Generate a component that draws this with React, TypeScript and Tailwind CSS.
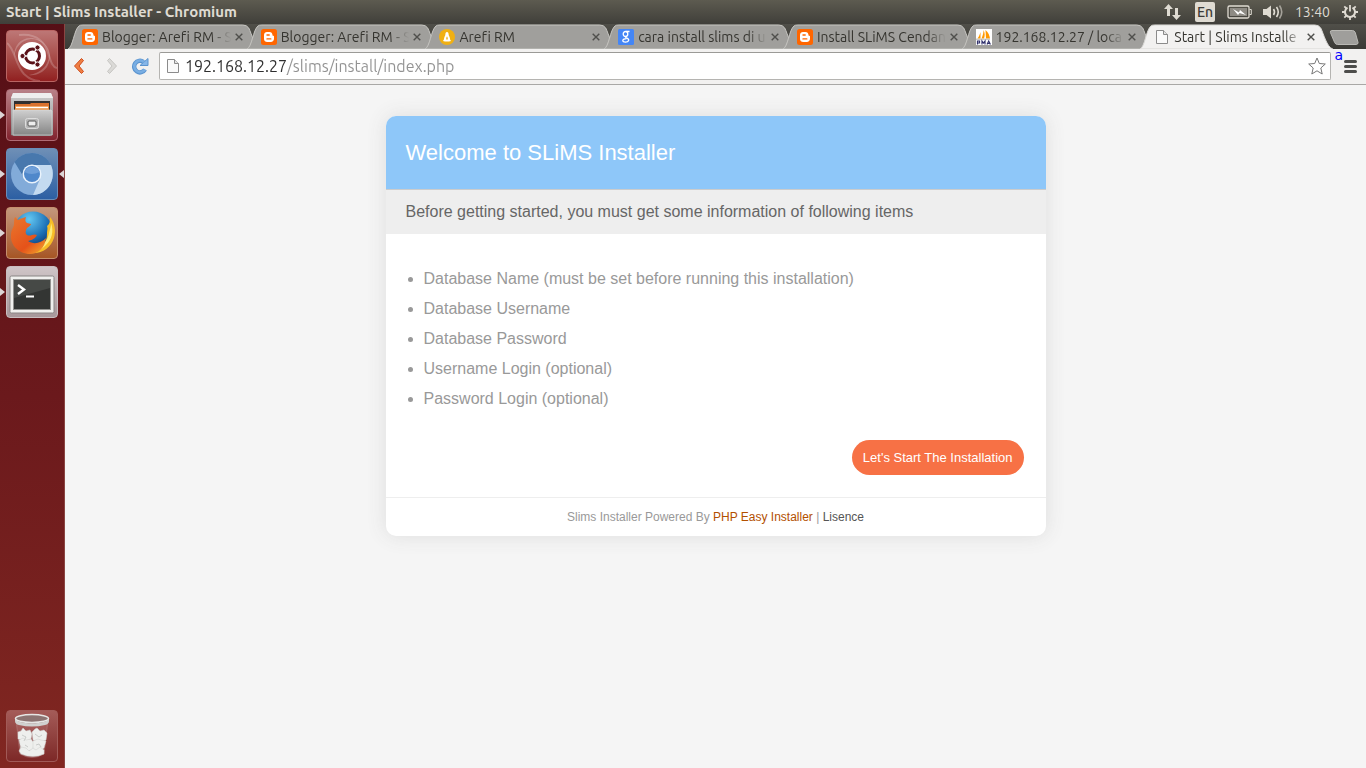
import type { ReactNode } from "react";
import clsx from "clsx";

const tabs = [
  { title: "Blogger: Arefi RM - S", icon: "blogger" },
  { title: "Blogger: Arefi RM - S", icon: "blogger" },
  { title: "Arefi RM", icon: "linux" },
  { title: "cara install slims di u", icon: "google" },
  { title: "Install SLiMS Cendan", icon: "blogger" },
  { title: "192.168.12.27 / loca", icon: "pma" },
  { title: "Start | Slims Installe", icon: "page", active: true },
];

const requirements = [
  "Database Name (must be set before running this installation)",
  "Database Username",
  "Database Password",
  "Username Login (optional)",
  "Password Login (optional)",
];

function PageIcon() {
  return (
    <svg viewBox="0 0 16 16" className="size-4 shrink-0">
      <path d="M2.5 1.5h7l4 4v9h-11z" fill="#fafafa" stroke="#8b8b8b" />
      <path d="M9.5 1.5v4h4" fill="#e4e4e4" stroke="#8b8b8b" />
    </svg>
  );
}

function Favicon({ name }: { name: string }) {
  if (name === "blogger") {
    return (
      <svg viewBox="0 0 16 16" className="size-4 shrink-0">
        <rect width="16" height="16" rx="2.5" fill="#ff6600" />
        <path
          d="M6 3h2.5C10.3 3 11.4 4.3 11.4 5.6c0 .9.3 1.2.9 1.2.5 0 .7.3.7.8v2.2C13 11.7 11.6 13 9.8 13H6.2C4.4 13 3 11.7 3 9.9V6c0-1.7 1.3-3 3-3z"
          fill="#fff"
        />
        <path d="M6 6h2.2M6 9.900h3.800" stroke="#ff6600" strokeWidth="1.4" strokeLinecap="round" />
      </svg>
    );
  }
  if (name === "linux") {
    return (
      <svg viewBox="0 0 16 16" className="size-4 shrink-0">
        <circle cx="8" cy="8" r="8" fill="#f0b013" />
        <path d="M8 3c1.200 0 1.600 1 1.600 2.300 0 1.500 1.500 3 1.500 5.200l.9 1.500-2 .6H6l-2-.6.9-1.500c0-2.200 1.500-3.700 1.500-5.200C6.400 4 6.800 3 8 3z" fill="#fff" />
        <path d="M8 7.200c.6 1 .9 2 .8 3.300H7.200C7.100 9.200 7.400 8.200 8 7.200z" fill="#f0b013" />
      </svg>
    );
  }
  if (name === "google") {
    return (
      <svg viewBox="0 0 16 16" className="size-4 shrink-0">
        <rect width="16" height="16" rx="1.500" fill="#4486f6" />
        <g fill="none" stroke="#fff" strokeWidth="1.300">
          <ellipse cx="7.500" cy="5" rx="2.300" ry="2.500" />
          <path d="M8 2.500h3.500M9 7.200c-1.800.8-1.800 1.200 0 2 1.500.7 2 1.500 1.500 2.600-.7 1.800-5.500 1.800-5.700 0C4.700 10.300 6.500 9.600 8.500 9.600" />
        </g>
      </svg>
    );
  }
  if (name === "pma") {
    return (
      <svg viewBox="0 0 16 16" className="size-4 shrink-0">
        <path d="M0 0h16v16H0z" fill="#fff" />
        <path d="M1.500 9.500C3 7.500 4 5 4.500 3v6.500zM5.500 9.500C7 6 7.600 3 7.500 1c1.500 3 1.500 6 .5 8.500zM9.500 1c3 2.500 4 5.500 4.500 8.500H10z" fill="#f90" />
        <path d="M0 10.200h14" stroke="#b9b4a8" />
        <path d="M1.500 15.500V12h2v2h-2M6 15.500V12l1.500 2L9 12v3.500M11 15.500l1.700-3.500 1.700 3.500M11.600 14.500h2.200" fill="none" stroke="#33336e" strokeWidth="1.200" />
      </svg>
    );
  }
  return <PageIcon />;
}

function StatusIcons() {
  return (
    <div className="flex items-center text-[#dfdbd2]">
      <svg viewBox="0 0 18 18" className="mr-3.5 size-[18px]" fill="currentColor">
        <path d="M5.500 1l4.500 5H7v7H4V6H1zM13.500 17L9 12h3V5h3v7h3z" />
      </svg>
      <span className="mr-3 flex h-5 w-5 items-center justify-center rounded-xs bg-[#dfdbd2] text-sm font-medium text-[#3c3b37]">En</span>
      <svg viewBox="0 0 26 16" className="mr-2.5 h-4 w-[26px]">
        <rect x="1" y="2" width="21" height="12" rx="1.500" fill="none" stroke="#dfdbd2" strokeWidth="1.300" />
        <rect x="3" y="4" width="17" height="8" fill="#8e8b84" />
        <path d="M22.500 5.500h1.800v5h-1.800" fill="none" stroke="#dfdbd2" />
        <path d="M6 5l6 3.500 1-2.500 6 5-6.500-2-1.500 2z" fill="#fff" />
      </svg>
      <svg viewBox="0 0 20 16" className="mr-3 h-4 w-5" fill="none" stroke="#dfdbd2" strokeWidth="1.600">
        <path d="M0 5h3.500L8 1.500v13L3.500 11H0z" fill="#dfdbd2" stroke="none" />
        <path d="M10.500 5q2 3 0 6M13.500 3q3.500 5 0 10" />
        <path d="M16.500 1.500q4.500 6.500 0 13" stroke="#a5a29a" />
      </svg>
      <time className="mr-3 text-sm">13:40</time>
      <svg viewBox="0 0 16 16" className="size-4" fill="none" stroke="#dfdbd2">
        <path d="M5.500 3.700A5 5 0 1 0 10.500 3.700" strokeWidth="2" />
        <path d="M8 1v6.500" strokeWidth="1.800" />
        <path d="M0 8h3M13 8h3M2.300 13.700l2-2M13.700 13.700l-2-2M8 13v3M2.300 2.300l2 2M13.700 2.300l-2 2" strokeWidth="1.800" />
      </svg>
    </div>
  );
}

function MenuBar() {
  return (
    <header className="flex h-6 shrink-0 items-center justify-between bg-linear-to-b from-[#5d5b50] to-[#403f3a] pr-2 pl-1.5 text-[#dfdbd2]">
      <h1 className="text-[15px] leading-6 font-bold">Start | Slims Installer - Chromium</h1>
      <StatusIcons />
    </header>
  );
}

function LauncherItem({ label, className, running, focused, children }: {
  label: string;
  className: string;
  running?: boolean;
  focused?: boolean;
  children: ReactNode;
}) {
  return (
    <div className="flex items-center">
      <span className="w-1.5">
        {running && (
          <svg viewBox="0 0 5 8" className="h-2 w-[5px]">
            <path d="M0 0l5 4-5 4z" fill="#dcd5d6" />
          </svg>
        )}
      </span>
      <button
        type="button"
        aria-label={label}
        className={clsx("size-13 overflow-hidden rounded-sm border", className)}
      >
        <svg viewBox="0 0 50 50" className="size-full">{children}</svg>
      </button>
      {focused && (
        <svg viewBox="0 0 5 8" className="ml-px h-2 w-[5px]">
          <path d="M5 0L0 4l5 4z" fill="#dcd5d6" />
        </svg>
      )}
    </div>
  );
}

function Launcher() {
  return (
    <aside className="flex w-[65px] shrink-0 flex-col justify-between border-r border-[#8a4542] bg-linear-to-b from-[#560f16] via-[#6b191c] to-[#812721] pt-1.5 pb-1.5">
      <nav className="flex flex-col gap-[7px]" aria-label="Launcher">
        <LauncherItem label="Search" className="border-[#b96563] bg-linear-to-b from-[#bd7776] to-[#911f20]">
          <path d="M7 27C6 11 19 3 32 9c11 5 14 17 8 27-4 6-12 9-18 8 12-2 20-10 20-20C41 13 32 8 24 8 14 9 8 17 7 27z" fill="#fff" opacity=".22" />
          <path d="M0 12C8 18 8 33 17 43c5 5 10 7 16 7M50 37C41 35 44 17 33 9 27 4 20 3 12 4" fill="none" stroke="#fff" strokeWidth="2" opacity=".2" />
          <circle cx="25" cy="25" r="14" fill="#fff" />
          <circle cx="25.500" cy="25" r="7" fill="none" stroke="#5b1218" strokeWidth="3" />
          <path d="M20 25h-5M28 20l3-5M28 30l3 5" stroke="#fff" strokeWidth="1.500" />
          <g fill="#5b1218" stroke="#fff">
            <circle cx="15.500" cy="25" r="2.600" />
            <circle cx="30.500" cy="16.500" r="2.600" />
            <circle cx="30.500" cy="33.500" r="2.600" />
          </g>
        </LauncherItem>
        <LauncherItem label="Files" running className="border-[#b06b74] bg-linear-to-b from-[#b88188] to-[#81212e]">
          <defs>
            <linearGradient id="cabinet" x2="0" y2="1">
              <stop stopColor="#cfcfcf" />
              <stop offset="1" stopColor="#858585" />
            </linearGradient>
          </defs>
          <path d="M6 3h38l2 5v37l-3 1H7l-3-1V8z" fill="url(#cabinet)" />
          <path d="M6 3h38l2 5H4z" fill="#eee" />
          <path d="M7 11h36v11H7z" fill="#303030" />
          <path d="M8 14h15l1-1h18v9H8z" fill="#d9722f" />
          <path d="M8 16h34v5H8z" fill="#eb8f3c" />
          <path d="M9 17.500h32" stroke="#fff" strokeWidth="1.500" />
          <path d="M6 20h38l1 1v24H6z" fill="url(#cabinet)" stroke="#ddd" strokeWidth=".6" />
          <rect x="18.500" y="28.500" width="13" height="10" rx="2" fill="#b5b5b5" stroke="#ddd" />
          <rect x="21" y="31" width="8" height="5" rx="1" fill="#ededed" stroke="#555" />
        </LauncherItem>
        <LauncherItem label="Chromium" running focused className="border-[#6a8db8] bg-linear-to-b from-[#6e8fb6] to-[#2c5fa3]">
          <circle cx="25" cy="25" r="21" fill="#82abd9" />
          <path d="M7.500 13C12 7 18 4 25 4c9 0 16 5 19 12H25c-6 0-10 5-9 11z" fill="#4878ad" />
          <path d="M25 16h19c6 15-4 30-18 30l7-16z" fill="#c3daf0" />
          <circle cx="25" cy="25" r="9.500" fill="#eaf3fc" />
          <circle cx="25" cy="25" r="8" fill="#4f88cb" />
          <path d="M17.500 23a8 8 0 0 1 15 0q-8 4-15 0z" fill="#6f9fd8" />
        </LauncherItem>
        <LauncherItem label="Firefox" running className="border-[#c58f6e] bg-linear-to-b from-[#c3977c] to-[#a65624]">
          <defs>
            <radialGradient id="globe" cx=".4" cy=".2" r=".8">
              <stop stopColor="#63c8f3" />
              <stop offset=".6" stopColor="#1d70b5" />
              <stop offset="1" stopColor="#0b2f68" />
            </radialGradient>
            <linearGradient id="fox" x2=".8" y2="1">
              <stop stopColor="#e9772d" />
              <stop offset=".7" stopColor="#e5521a" />
              <stop offset="1" stopColor="#f09a2b" />
            </linearGradient>
          </defs>
          <circle cx="26" cy="23" r="19.500" fill="url(#globe)" />
          <path d="M43 9c5 6 6 14 4 21-3 9-11 15-20 15 8-4 13-10 13-19 0-4 1-5 0-8 3-2 3-5 3-9z" fill="#f7bd27" />
          <path d="M44 15c3 8 1 17-6 23-3 3-6 4-9 4 7-5 12-10 13-17 1-4 2-6 2-10z" fill="#fdec7b" />
          <path d="M8 9c1 1 2 2 3 3 3-2 6-2 8-3-1 3-1 5 1 6l4 1c0 2-4 3-5 6-1 3 0 4 1 5 4 2 6-2 10 0-3 5-6 5-9 6 6 4 13 2 18-3-1 10-8 16-16 16C12 46 3 37 4 27c0-5 3-8 3-11 0-2 0-5 1-7z" fill="url(#fox)" />
        </LauncherItem>
        <LauncherItem label="Terminal" running className="border-[#c9bec0] bg-linear-to-b from-[#cfc5c7] to-[#a7989b]">
          <rect x="3" y="9" width="44" height="37" rx="1.500" fill="#f0f0ee" stroke="#898584" />
          <rect x="6" y="12" width="38" height="31" fill="#929290" />
          <rect x="7" y="13" width="36" height="29" fill="#333533" />
          <path d="M7 13h36v8L7 31z" fill="#747674" opacity=".3" />
          <path d="M11 18l6 4.500-6 4.500" fill="none" stroke="#fff" strokeWidth="2.400" />
          <path d="M19 29.500h8" stroke="#fff" strokeWidth="2" />
        </LauncherItem>
      </nav>
      <LauncherItem label="Trash" className="border-[#a15a57] bg-linear-to-b from-[#a45b58] to-[#7d2827]">
        <path d="M9 8l4 35q12 7 24 0l4-35" fill="#b77775" opacity=".35" stroke="#d1aaa9" />
        <g fill="#eeefed" stroke="#cfd1cf" strokeWidth=".5">
          <path d="M11 21l3-1 2-3 3 3 4-1 2 4-1 5-5 2-8-2z" />
          <path d="M25 21l3-3 2-1 3 3 4-1 3 3-1 7-7 3-6-3z" />
          <path d="M12 29l4-2 3 2 5-1 3 4-1 6-6 3-6-3z" />
          <path d="M26 30l5-2 3 1 5 1-2 7-5 4-6-3z" />
          <path d="M12 40l2-4 5 1 3 3 4-3 3 2 4-3 4 3v4q-11 5-23 0z" />
        </g>
        <path d="M15 24l4 2-2 4M28 23l4 3 3-2M18 34l3 2M29 34l3-1 2 3" fill="none" stroke="#b9bcb9" strokeWidth=".7" />
        <ellipse cx="25" cy="8" rx="16.500" ry="4.500" fill="#8c7472" />
        <path d="M8 7c0 7 34 7 34 0v3q0 3-4 4-13 3-26 0-4-1-4-4z" fill="#d0d1cf" />
        <ellipse cx="25" cy="7.500" rx="16.500" ry="4" fill="none" stroke="#e6e6e4" strokeWidth="1.500" />
      </LauncherItem>
    </aside>
  );
}

function CloseIcon() {
  return (
    <svg viewBox="0 0 8 8" className="size-2" stroke="#4f4f4c" strokeWidth="1.400">
      <path d="M.7.7l6.600 6.600M7.300.7L.7 7.300" />
    </svg>
  );
}

function Tab({ title, icon, active }: { title: string; icon: string; active?: boolean }) {
  return (
    <div className="relative -mr-3.5 flex h-[25px] min-w-0 flex-1 items-center pr-[18px] pl-3.5">
      <svg viewBox="0 0 193 25" preserveAspectRatio="none" className="absolute inset-0 -z-10 size-full">
        <path
          d="M0 25C5 23 6 6 11 2Q12 1 15 1H175Q179 1 181 4C184 10 187 23 193 25z"
          fill={active ? "#f2f1f0" : "#a09f9c"}
          stroke={active ? "#d9d8d5" : "#c6c5c1"}
          strokeWidth="1"
        />
      </svg>
      <button type="button" role="tab" aria-selected={!!active} className="flex min-w-0 flex-1 items-center gap-1 text-left">
        <Favicon name={icon} />
        <span className="min-w-0 flex-1 overflow-hidden mask-r-from-85% text-sm leading-5 whitespace-nowrap text-[#35342f]">
          {title}
        </span>
      </button>
      <button type="button" aria-label="Close tab" className="ml-1">
        <CloseIcon />
      </button>
    </div>
  );
}

function TabStrip() {
  return (
    <div className="relative isolate flex h-[25px] items-end bg-linear-to-b from-[#504f49] to-[#3b3a36] pr-[7px] pl-[3px]">
      <div role="tablist" className="flex min-w-0 flex-1 pr-3.5">
        {tabs.map((tab, i) => (
          <div key={i} className={clsx("isolate flex min-w-0 flex-1", tab.active && "z-10")}>
            <Tab {...tab} />
          </div>
        ))}
      </div>
      <button type="button" aria-label="New tab" className="mb-1 -ml-1">
        <svg viewBox="0 0 32 15" className="h-[15px] w-[30px]" preserveAspectRatio="none">
          <path d="M3 .5h22q2 0 3 2l3 10q0 2-2 2H9q-2 0-3-2L1.500 2.500Q1 .5 3 .5z" fill="#9f9e9b" stroke="#bcbbb7" />
        </svg>
      </button>
    </div>
  );
}

function Toolbar() {
  return (
    <div className="relative flex h-9 items-center border-b border-[#a9a8a6] bg-[#f2f1f0] pr-[9px] pb-px pl-2">
      <button type="button" aria-label="Back" className="mr-[18px]">
        <svg viewBox="0 0 14 18" className="h-[18px] w-3.5">
          <path d="M8.500 1.500L1.500 9l7 7.500 2-2L6 9l4.500-5.500z" fill="#ef7f43" stroke="#cf4d1e" strokeLinejoin="round" />
        </svg>
      </button>
      <button type="button" aria-label="Forward" className="mr-3">
        <svg viewBox="0 0 14 18" className="h-[18px] w-3.5">
          <path d="M4.500 1.500l7 7.500-7 7.500-2-2L7 9 2.500 3.500z" fill="#dbdad7" stroke="#c6c5c2" strokeLinejoin="round" />
        </svg>
      </button>
      <button type="button" aria-label="Reload" className="mr-2.5">
        <svg viewBox="0 0 18 18" className="size-[18px]">
          <path d="M12.500 5A5.800 5.800 0 1 0 14 12.500" fill="none" stroke="#5b94cf" strokeWidth="4.400" />
          <path d="M9 8.500h8V1.500z" fill="#86b6e8" stroke="#5b94cf" strokeLinejoin="round" />
          <path d="M13 5A5.800 5.800 0 1 0 14 12.500" fill="none" stroke="#79aee3" strokeWidth="2.600" />
        </svg>
      </button>
      <div className="flex h-7 min-w-0 flex-1 items-center gap-1 rounded-xs border border-[#b5b4b1] border-t-[#9b9a97] bg-white pr-1 pl-[5px]">
        <PageIcon />
        <input
          aria-label="Address"
          defaultValue="192.168.12.27/slims/install/index.php"
          className="min-w-0 flex-1 bg-[linear-gradient(90deg,#2e2e2e_102px,#929292_102px)] bg-clip-text text-base leading-6 text-transparent outline-none"
        />
        <button type="button" aria-label="Bookmark this page">
          <svg viewBox="0 0 18 18" className="size-[18px]">
            <path d="M9 1l2.300 5.500 6 .5-4.500 4 1.400 6L9 13.800 3.800 17l1.400-6L.7 7l6-.5z" fill="#fff" stroke="#777" strokeLinejoin="round" />
          </svg>
        </button>
      </div>
      <button type="button" aria-label="Menu" className="ml-[13px]">
        <svg viewBox="0 0 13 13" className="size-[13px]" stroke="#4d4d4b" strokeWidth="3" strokeLinecap="round">
          <path d="M1.500 1.500h10M1.500 6.500h10M1.500 11.500h10" />
        </svg>
      </button>
      <span className="absolute top-0 right-[23px] font-['DejaVu_Sans',sans-serif] text-sm leading-3 text-[#0000ff]">a</span>
    </div>
  );
}

function InstallerPage() {
  return (
    <main className="flex-1 bg-[#f5f5f5] px-4 pt-[31px] font-['Liberation_Sans',Arial,sans-serif]">
      <section className="mx-auto max-w-[660px] overflow-hidden rounded-[10px] bg-white shadow-[0_0_20px_#dddddd]">
        <h2 className="border-b border-[#cccccc] bg-[#8ec7f9] px-5 py-5 text-[22px] leading-[33px] text-white">
          Welcome to SLiMS Installer
        </h2>
        <p className="bg-[#eeeeee] px-5 py-2.5 text-base leading-6 text-[#666666]">
          Before getting started, you must get some information of following items
        </p>
        <div className="px-[22px] pt-[30px] pb-[22px]">
          <ul className="list-disc pl-4 text-base leading-[30px] text-[#999999]">
            {requirements.map((item) => (
              <li key={item}>{item}</li>
            ))}
          </ul>
          <div className="mt-[26px] flex justify-end">
            <button type="button" className="h-[35px] rounded-full bg-[#f77145] px-[11px] text-[13px] text-white">
              Let's Start The Installation
            </button>
          </div>
        </div>
        <footer className="border-t border-[#eeeeee] py-2.5 text-center text-xs leading-[18px] text-[#999999]">
          Slims Installer Powered By <a href="#" className="text-[#b35000]">PHP Easy Installer</a> |{" "}
          <a href="#" className="text-[#555555]">Lisence</a>
        </footer>
      </section>
    </main>
  );
}

export default function App() {
  return (
    <div className="flex min-h-screen flex-col font-['Ubuntu','Noto_Sans',sans-serif] [font-variant-ligatures:none]">
      <MenuBar />
      <div className="flex flex-1">
        <Launcher />
        <div className="flex min-w-0 flex-1 flex-col">
          <TabStrip />
          <Toolbar />
          <InstallerPage />
        </div>
      </div>
    </div>
  );
}
